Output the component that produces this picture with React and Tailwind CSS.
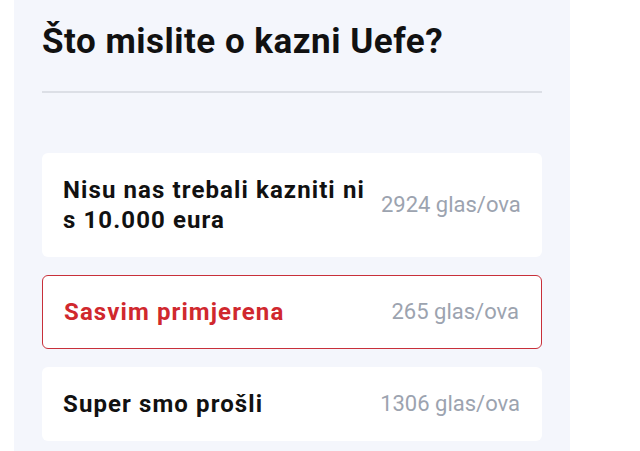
export default function App() {
  const options = [
    { label: ["Nisu nas trebali kazniti ni", "s 10.000 eura"], votes: "2924 glas/ova", active: false },
    { label: ["Sasvim primjerena"], votes: "265 glas/ova", active: true },
    { label: ["Super smo prošli"], votes: "1306 glas/ova", active: false },
  ];
  return (
    <div className="w-[640px] h-[451px] bg-white overflow-hidden" style={{ fontFamily: "Roboto, 'Liberation Sans', sans-serif" }}>
      <div className="ml-[14px] w-[556px] h-full bg-[#f4f6fc] px-[28px] pt-[22px]">
        <h2 className="text-[35px] leading-[40px] font-bold text-[#111111] tracking-[0.5px] whitespace-nowrap">Što mislite o kazni Uefe?</h2>
        <div className="mt-[29px] h-[2px] bg-[#dcdfe6]"></div>
        <div className="mt-[60px] flex flex-col gap-[18px]">
          {options.map((o) => (
            <div
              key={o.votes}
              className={
                "flex items-center gap-[16px] rounded-[6px] bg-white pl-[21px] pr-[22px] " +
                (o.active ? "border border-[#c8303a] py-[21px]" : "py-[22px]")
              }
            >
              <div className={"flex-1 text-[24px] leading-[30px] font-bold tracking-[1.1px] " + (o.active ? "text-[#d0282e]" : "text-[#111111]")}>
                {o.label.map((l, i) => (
                  <div key={i} className="whitespace-nowrap">{l}</div>
                ))}
              </div>
              <div className="text-[22px] leading-[28px] font-normal text-[#9ca3af] whitespace-nowrap">{o.votes}</div>
            </div>
          ))}
        </div>
      </div>
    </div>
  );
}
